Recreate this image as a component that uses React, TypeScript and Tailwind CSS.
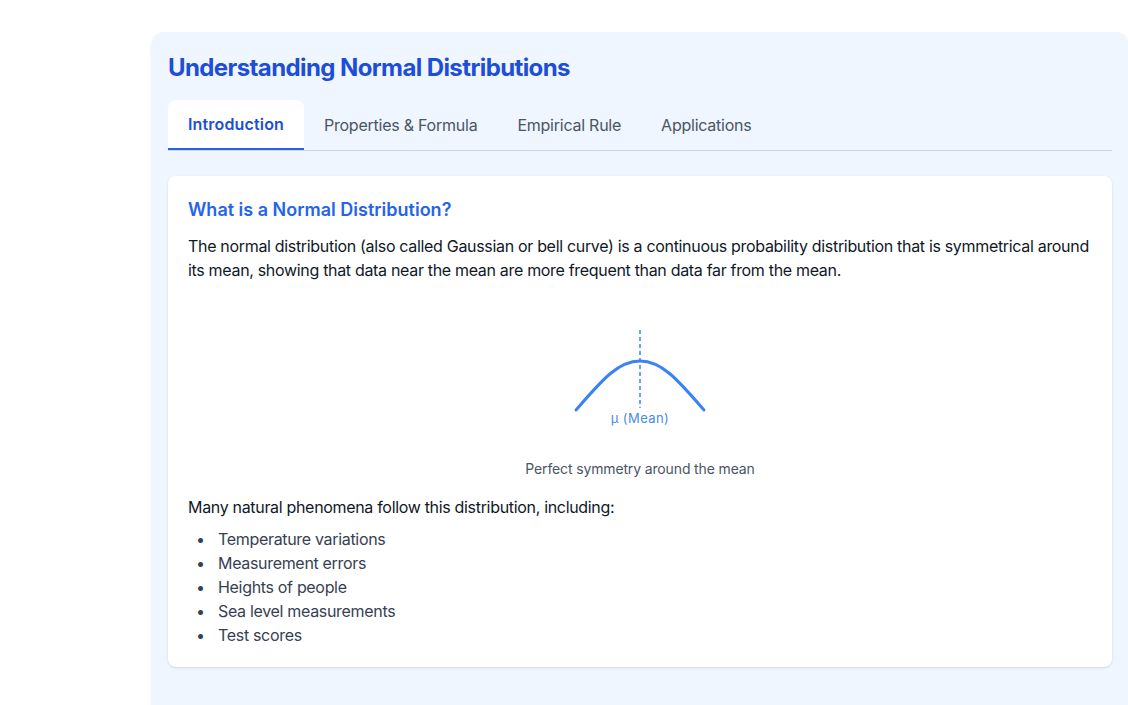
import { useState } from "react";

const tabs = ["Introduction", "Properties & Formula", "Empirical Rule", "Applications"];

const examples = [
  "Temperature variations",
  "Measurement errors",
  "Heights of people",
  "Sea level measurements",
  "Test scores",
];

function BellCurve() {
  return (
    <svg width="200" height="141" viewBox="0 0 200 141" className="mx-auto block">
      <line x1="100" y1="24" x2="100" y2="102" stroke="#3b82f6" strokeWidth="1.5" strokeDasharray="4 3" />
      <path
        d="M36 104 C 62 74, 78 55, 100 55 S 138 74, 164 104"
        fill="none"
        stroke="#3b82f6"
        strokeWidth="3"
        strokeLinecap="round"
      />
      <text
        x="100"
        y="117"
        textAnchor="middle"
        fontSize="13"
        letterSpacing="0.4"
        fill="#4a8be6"
        fontFamily="Inter, sans-serif"
      >
        μ (Mean)
      </text>
    </svg>
  );
}

export default function App() {
  const [active, setActive] = useState(0);

  return (
    <div className="min-h-[705px] overflow-hidden bg-white pt-8 font-['Inter',sans-serif]">
      <div className="ml-[152px] min-h-[700px] w-[976px] rounded-xl bg-[#eff6ff] px-4 pt-5 shadow-md">
        <h1 className="mb-4 text-2xl font-bold tracking-tight text-[#1d4ed8]">Understanding Normal Distributions</h1>

        <div className="flex border-b border-gray-300">
          {tabs.map((t, i) => (
            <button
              key={t}
              onClick={() => setActive(i)}
              className={
                i === active
                  ? "rounded-t-lg border-b-2 border-[#2563eb] bg-white px-5 py-3 text-base font-semibold tracking-[0.01em] text-[#1d4ed8]"
                  : "px-5 py-3 text-base tracking-[-0.015em] text-gray-600"
              }
            >
              {t}
            </button>
          ))}
        </div>

        <div className="mt-[25px] rounded-lg bg-white p-5 tracking-[-0.02em] shadow-sm">
          <h2 className="mb-2.5 text-lg font-semibold tracking-normal text-[#2563eb]">What is a Normal Distribution?</h2>
          <p className="text-base leading-6 text-gray-900">
            The normal distribution (also called Gaussian or bell curve) is a continuous probability distribution
            that is symmetrical around its mean, showing that data near the mean are more frequent than data far
            from the mean.
          </p>

          <div className="mb-4 mt-6 text-center">
            <BellCurve />
            <p className="mt-3 text-sm tracking-[-0.01em] text-gray-600">Perfect symmetry around the mean</p>
          </div>

          <p className="text-base text-gray-900">Many natural phenomena follow this distribution, including:</p>
          <ul className="mt-2 text-base leading-6 text-gray-700">
            {examples.map((e) => (
              <li key={e} className="flex">
                <span className="w-[30px] shrink-0 pl-2">•</span>
                <span>{e}</span>
              </li>
            ))}
          </ul>
        </div>
      </div>
    </div>
  );
}
